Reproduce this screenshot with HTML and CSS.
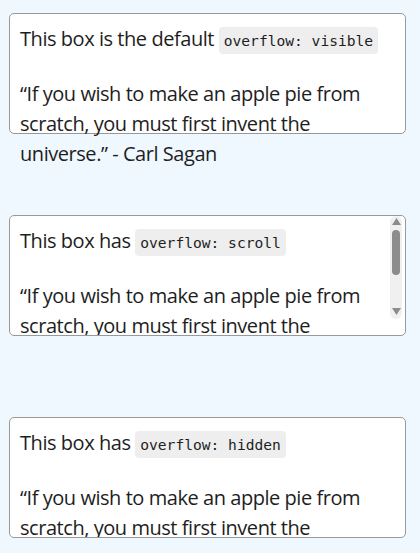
FILE: index.html
```html
<!DOCTYPE html>
<html lang="en">
<head>
<meta charset="utf-8">
<title>Overflow</title>
<link rel="stylesheet" href="styles.css">
</head>
<body>
<main class="page">
  <div class="box box-visible">
    <p class="lead">This box is the default <code>overflow: visible</code></p>
    <p>“If you wish to make an apple pie from scratch, you must first invent the universe.” - Carl Sagan</p>
  </div>
  <div class="box box-scroll">
    <p class="lead">This box has <code>overflow: scroll</code></p>
    <p>“If you wish to make an apple pie from scratch, you must first invent the universe.” - Carl Sagan</p>
    <div class="scrollbar" aria-hidden="true">
      <svg class="sb-arrow" width="9" height="7" viewBox="0 0 9 7"><polygon points="4.5,0 9,7 0,7" fill="#8c8c8c"/></svg>
      <div class="sb-thumb"></div>
      <div class="sb-spacer"></div>
      <svg class="sb-arrow" width="9" height="7" viewBox="0 0 9 7"><polygon points="0,0 9,0 4.5,7" fill="#8c8c8c"/></svg>
    </div>
  </div>
  <div class="box box-hidden">
    <p class="lead">This box has <code>overflow: hidden</code></p>
    <p>“If you wish to make an apple pie from scratch, you must first invent the universe.” - Carl Sagan</p>
  </div>
</main>
</body>
</html>
```
FILE: styles.css
```css
html, body {
  margin: 0;
  background: #f0f8ff;
}
body {
  font-family: "Open Sans", "Noto Sans", sans-serif;
  font-size: 20px;
  line-height: 30px;
  letter-spacing: -0.45px;
  color: #1e1e1e;
}
.page {
  display: flex;
  flex-direction: column;
  gap: 81px;
  padding: 13px 0 0 9px;
}
.box {
  position: relative;
  box-sizing: border-box;
  width: 397px;
  height: 121px;
  padding: 10px;
  border: 1px solid #999;
  border-radius: 5px;
  background: #fff;
}
.box-visible { overflow: visible; }
.box-scroll {
  overflow: hidden;
  padding-right: 25px;
}
.box-hidden { overflow: hidden; }
p {
  margin: 0;
}
.lead {
  margin-bottom: 23px;
}
code {
  font-family: "DejaVu Sans Mono", monospace;
  font-size: 14.6px;
  letter-spacing: 0;
  background: #eee;
  border-radius: 4px;
  padding: 5px 5px;
}
.scrollbar {
  position: absolute;
  top: 0;
  right: 3px;
  width: 12px;
  height: 103px;
  box-sizing: border-box;
  padding: 2px 0 4px;
  border-radius: 6px;
  background: #f0f0f0;
  display: flex;
  flex-direction: column;
  align-items: center;
}
.sb-arrow {
  display: block;
  flex: none;
}
.sb-thumb {
  flex: none;
  width: 8px;
  height: 45px;
  margin-top: 5px;
  border-radius: 4px;
  background: #8c8c8c;
}
.sb-spacer {
  flex: 1;
}
```
